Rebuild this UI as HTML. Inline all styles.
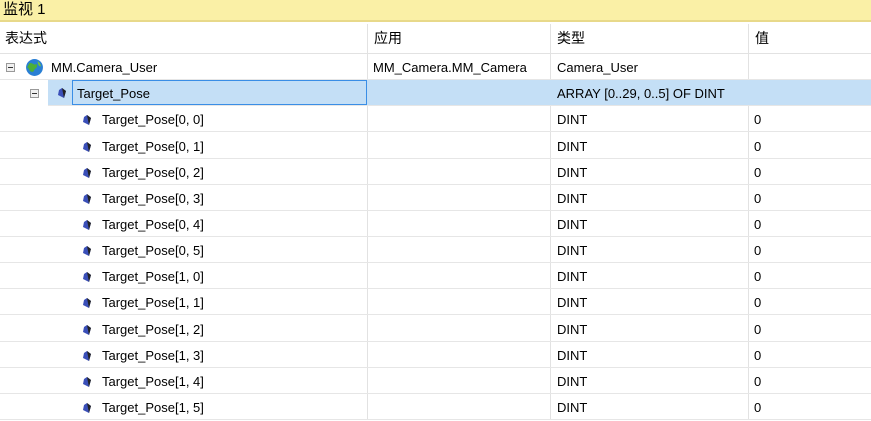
<!DOCTYPE html>
<html><head><meta charset="utf-8"><style>
body{margin:0;width:871px;height:420px;overflow:hidden;background:#fff;font-family:"Liberation Sans","Noto Sans CJK SC",sans-serif;font-size:13px;color:#000;position:relative}
.title{position:absolute;left:0;top:0;width:871px;height:22px;background:#faf0a6;border-bottom:2px solid #e8d98a;font-size:15px;line-height:20px;padding-left:3px;box-sizing:border-box}
.hdr{position:absolute;top:24px;height:29px;width:871px;border-bottom:1px solid #e2e2e2;font-size:14px;line-height:29px}
.row{position:absolute;left:0;width:871px;height:26px;border-bottom:1px solid #e6e6e6;box-sizing:border-box;line-height:27px}
.c{position:absolute;top:0;height:100%}
.vl{position:absolute;top:24px;bottom:0;width:1px;background:#e2e2e2}
.dia{position:absolute;width:8px;height:10px}
.minus{position:absolute;width:9px;height:9px;border:1px solid #999;background:#f0f0f0;box-sizing:border-box}
.minus:after{content:"";position:absolute;left:1px;top:3px;width:5px;height:1px;background:#333}
</style></head><body>
<div class="title">监视 1</div>
<div class="hdr"><span style="position:absolute;left:5px">表达式</span><span style="position:absolute;left:374px">应用</span><span style="position:absolute;left:557px">类型</span><span style="position:absolute;left:755px">值</span></div>
<div class="vl" style="left:367px"></div><div class="vl" style="left:550px"></div><div class="vl" style="left:748px"></div>
<div class="row" style="top:54px"><div class="minus" style="left:6px;top:9px"></div>
<svg style="position:absolute;left:25px;top:4px" width="19" height="19" viewBox="0 0 18 18"><circle cx="9" cy="9" r="8" fill="#2a7fd4"/><path d="M4 5c3-1 4 2 6 1s2 3 0 4-1 4-4 3-2-4-4-4z" fill="#4caf3a"/><path d="M12 3c2 1 3 3 3 5-2 0-3-2-3-5z" fill="#6fc04a"/></svg>
<span class="c" style="left:51px">MM.Camera_User</span><span class="c" style="left:373px">MM_Camera.MM_Camera</span><span class="c" style="left:557px">Camera_User</span></div>
<div class="row" style="top:80.2px;background:#c4dff6;left:48px;width:823px"><div class="minus" style="left:-18px;top:9px"></div>
<svg class="dia" style="left:10px;top:8px" viewBox="0 0 8 10"><path d="M4 0L8 3 6 10 0 7 1 2z" fill="#3a4fb8"/><path d="M4 0L8 3 6 10z" fill="#222"/></svg>
<div style="position:absolute;left:24px;top:0;width:295px;height:25px;border:1px solid #3a8ee6;box-sizing:border-box"></div>
<span class="c" style="left:29px">Target_Pose</span><span class="c" style="left:509px">ARRAY [0..29, 0..5] OF DINT</span></div>
<div id="rows"></div>
<script>
var h='',n=0;
for(var i=0;i<2;i++)for(var j=0;j<6;j++){var t=106.4+26.15*n;n++;
h+='<div class="row" style="top:'+t+'px"><svg class="dia" style="left:83px;top:9px" viewBox="0 0 8 10"><path d="M4 0L8 3 6 10 0 7 1 2z" fill="#3a4fb8"/><path d="M4 0L8 3 6 10z" fill="#222"/></svg><span class="c" style="left:102px">Target_Pose['+i+', '+j+']</span><span class="c" style="left:557px">DINT</span><span class="c" style="left:754px">0</span></div>';}
document.getElementById('rows').innerHTML=h;
</script>
</body></html>
